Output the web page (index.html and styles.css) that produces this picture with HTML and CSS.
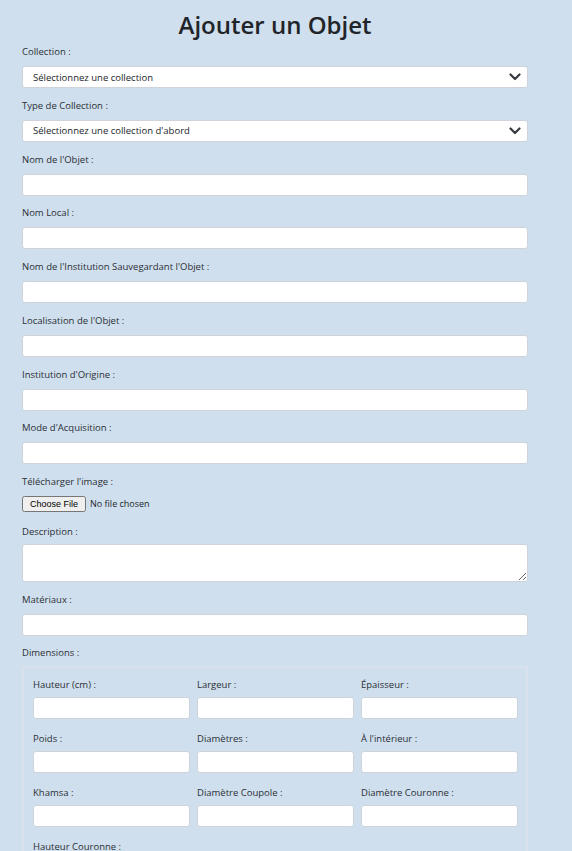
FILE: index.html
```html
<!DOCTYPE html>
<html lang="fr">
<head>
  <meta charset="UTF-8" />
  <title>Ajouter un Objet</title>
  <link rel="stylesheet" href="styles.css">
</head>
<body>

<div class="page">
  <h1>Ajouter un Objet</h1>

  <form class="form">
    <div class="group">
      <label>Collection :</label>
      <div class="select-wrap">
        <select class="field">
          <option>Sélectionnez une collection</option>
        </select>
        <svg class="chevron" width="12" height="8" viewBox="0 0 12 8"><path d="M1.5 1.5 L6 6 L10.5 1.5" fill="none" stroke="#343a40" stroke-width="2.2" stroke-linecap="round" stroke-linejoin="round"/></svg>
      </div>
    </div>

    <div class="group">
      <label>Type de Collection :</label>
      <div class="select-wrap">
        <select class="field">
          <option>Sélectionnez une collection d'abord</option>
        </select>
        <svg class="chevron" width="12" height="8" viewBox="0 0 12 8"><path d="M1.5 1.5 L6 6 L10.5 1.5" fill="none" stroke="#343a40" stroke-width="2.2" stroke-linecap="round" stroke-linejoin="round"/></svg>
      </div>
    </div>

    <div class="group">
      <label>Nom de l'Objet :</label>
      <input class="field" type="text">
    </div>

    <div class="group">
      <label>Nom Local :</label>
      <input class="field" type="text">
    </div>

    <div class="group">
      <label>Nom de l'Institution Sauvegardant l'Objet :</label>
      <input class="field" type="text">
    </div>

    <div class="group">
      <label>Localisation de l'Objet :</label>
      <input class="field" type="text">
    </div>

    <div class="group">
      <label>Institution d'Origine :</label>
      <input class="field" type="text">
    </div>

    <div class="group">
      <label>Mode d'Acquisition :</label>
      <input class="field" type="text">
    </div>

    <div class="group">
      <label>Télécharger l'image :</label>
      <input class="file" type="file">
    </div>

    <div class="group">
      <label>Description :</label>
      <textarea class="field area"></textarea>
    </div>

    <div class="group">
      <label>Matériaux :</label>
      <input class="field" type="text">
    </div>

    <div class="group">
      <label class="dims-title">Dimensions :</label>
      <fieldset class="dims">
        <div class="dim">
          <label>Hauteur (cm) :</label>
          <input class="field" type="text">
        </div>
        <div class="dim">
          <label>Largeur :</label>
          <input class="field" type="text">
        </div>
        <div class="dim">
          <label>Épaisseur :</label>
          <input class="field" type="text">
        </div>
        <div class="dim">
          <label>Poids :</label>
          <input class="field" type="text">
        </div>
        <div class="dim">
          <label>Diamètres :</label>
          <input class="field" type="text">
        </div>
        <div class="dim">
          <label>À l'intérieur :</label>
          <input class="field" type="text">
        </div>
        <div class="dim">
          <label>Khamsa :</label>
          <input class="field" type="text">
        </div>
        <div class="dim">
          <label>Diamètre Coupole :</label>
          <input class="field" type="text">
        </div>
        <div class="dim">
          <label>Diamètre Couronne :</label>
          <input class="field" type="text">
        </div>
        <div class="dim">
          <label>Hauteur Couronne :</label>
          <input class="field" type="text">
        </div>
      </fieldset>
    </div>
  </form>
</div>

</body>
</html>
```

FILE: styles.css
```css
* {
  box-sizing: border-box;
}
html, body {
  margin: 0;
  padding: 0;
  background: #cfdfee;
  font-family: 'Open Sans', 'Noto Sans', sans-serif;
  color: #2b2f35;
  overflow: hidden;
}

.page {
  width: 506px;
  margin-left: 22px;
}

h1 {
  margin: 0 0 3px 0;
  padding-top: 8px;
  font-size: 24px;
  line-height: 34px;
  font-weight: 600;
  text-align: center;
  color: #212529;
}

.group {
  display: flex;
  flex-direction: column;
  margin-bottom: 10.75px;
}

.group > label,
.dim label {
  font-size: 9.5px;
  line-height: 14px;
  margin-bottom: 7px;
}

.field {
  display: block;
  width: 100%;
  height: 22px;
  border: 1px solid #ced4da;
  border-radius: 3px;
  background: #fff;
  padding: 0 10px;
  font-family: inherit;
  font-size: 9.5px;
  color: #212529;
  outline: none;
}

.select-wrap {
  position: relative;
}

select.field {
  appearance: none;
  -webkit-appearance: none;
}

.chevron {
  position: absolute;
  right: 7px;
  top: 7px;
  pointer-events: none;
}

.file {
  height: 18px;
  font-family: inherit;
  font-size: 9px;
  color: #212529;
}

.area {
  height: 38px;
  resize: vertical;
  padding: 4px 10px;
}

.group > label + .area {
  margin-top: -2px;
}

.group > .dims-title {
  margin-bottom: 6px;
}

.dims {
  margin: 0;
  min-width: 0;
  border: 2px solid #d9e2ec;
  padding: 10px 9px 20px 9px;
  display: grid;
  grid-template-columns: repeat(3, 157px);
  column-gap: 7px;
  row-gap: 13px;
}

.dim {
  display: flex;
  flex-direction: column;
}

.dim label {
  margin-bottom: 5px;
}
```
